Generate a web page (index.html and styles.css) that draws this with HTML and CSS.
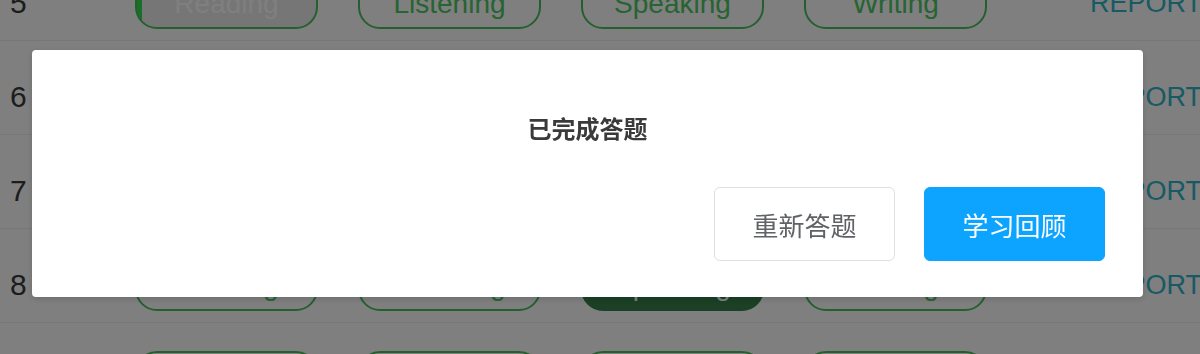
FILE: index.html
```html
<!DOCTYPE html>
<html lang="zh-CN">
<head>
<meta charset="utf-8">
<title>已完成答题</title>
<link rel="stylesheet" href="styles.css">
</head>
<body>
<div class="viewport">
  <div class="list">
    <div class="row">
      <div class="num">5</div>
      <div class="pills">
        <div class="pill done">Reading</div>
        <div class="pill">Listening</div>
        <div class="pill">Speaking</div>
        <div class="pill">Writing</div>
      </div>
      <div class="report">REPORT</div>
    </div>
    <div class="row">
      <div class="num">6</div>
      <div class="pills">
        <div class="pill">Reading</div>
        <div class="pill">Listening</div>
        <div class="pill">Speaking</div>
        <div class="pill">Writing</div>
      </div>
      <div class="report">REPORT</div>
    </div>
    <div class="row">
      <div class="num">7</div>
      <div class="pills">
        <div class="pill">Reading</div>
        <div class="pill">Listening</div>
        <div class="pill">Speaking</div>
        <div class="pill">Writing</div>
      </div>
      <div class="report">REPORT</div>
    </div>
    <div class="row">
      <div class="num">8</div>
      <div class="pills">
        <div class="pill">Reading</div>
        <div class="pill">Listening</div>
        <div class="pill active">Speaking</div>
        <div class="pill">Writing</div>
      </div>
      <div class="report">REPORT</div>
    </div>
    <div class="row">
      <div class="num">9</div>
      <div class="pills">
        <div class="pill">Reading</div>
        <div class="pill">Listening</div>
        <div class="pill">Speaking</div>
        <div class="pill">Writing</div>
      </div>
      <div class="report">REPORT</div>
    </div>
  </div>
</div>

<div class="mask"></div>

<div class="dialog">
  <div class="dialog-title">已完成答题</div>
  <div class="dialog-footer">
    <button class="btn btn-default">重新答题</button>
    <button class="btn btn-primary">学习回顾</button>
  </div>
</div>
</body>
</html>
```

FILE: styles.css
```css
html, body {
  margin: 0;
  padding: 0;
  background: #ffffff;
  overflow: hidden;
  height: 100%;
}

body {
  font-family: "Liberation Sans", Arial, "Noto Sans CJK SC", sans-serif;
}

.viewport {
  height: 100vh;
  overflow: hidden;
}

.list {
  margin-top: -53px;
}

.row {
  display: flex;
  align-items: center;
  height: 94px;
  box-sizing: border-box;
  padding-top: 17px;
  border-bottom: 1px solid #eeeeee;
}

.num {
  width: 135px;
  flex: none;
  box-sizing: border-box;
  padding-left: 10px;
  padding-top: 2px;
  font-size: 30px;
  color: #3a3a3a;
}

.pills {
  display: flex;
  gap: 40px;
  flex: none;
}

.pill {
  width: 183px;
  height: 54px;
  box-sizing: border-box;
  border: 2px solid #48c05c;
  border-radius: 22px;
  display: flex;
  align-items: center;
  justify-content: center;
  padding-top: 4px;
  font-size: 28px;
  color: #4cc862;
}

.pill.done {
  background: linear-gradient(to right, #30e050 0, #30e050 5px, #ececec 5px);
  color: #ffffff;
}

.pill.active {
  background: #36804a;
  border-color: #36804a;
  color: #ffffff;
}

.report {
  margin-left: 103px;
  padding-top: 2px;
  font-size: 27px;
  color: #30b4c6;
  white-space: nowrap;
}

.mask {
  position: fixed;
  inset: 0;
  background: rgba(0, 0, 0, 0.5);
}

.dialog {
  position: fixed;
  left: 32px;
  top: 50px;
  width: 1111px;
  box-sizing: border-box;
  padding: 60px 38px 36px;
  background: #ffffff;
  border-radius: 4px;
  box-shadow: 0 2px 6px rgba(0, 0, 0, 0.15);
}

.dialog-title {
  text-align: center;
  font-family: "Noto Sans CJK SC", sans-serif;
  font-size: 24px;
  line-height: 36px;
  font-weight: 700;
  color: #3a3a3a;
}

.dialog-footer {
  margin-top: 41px;
  display: flex;
  justify-content: flex-end;
  gap: 29px;
}

.btn {
  width: 181px;
  height: 74px;
  box-sizing: border-box;
  border-radius: 6px;
  font-family: "Noto Sans CJK SC", sans-serif;
  font-size: 26px;
  padding: 0;
  cursor: pointer;
}

.btn-default {
  background: #ffffff;
  border: 1px solid #dcdfe6;
  color: #606266;
}

.btn-primary {
  background: #0ca4ff;
  border: 1px solid #0ca4ff;
  color: #ffffff;
}
```
